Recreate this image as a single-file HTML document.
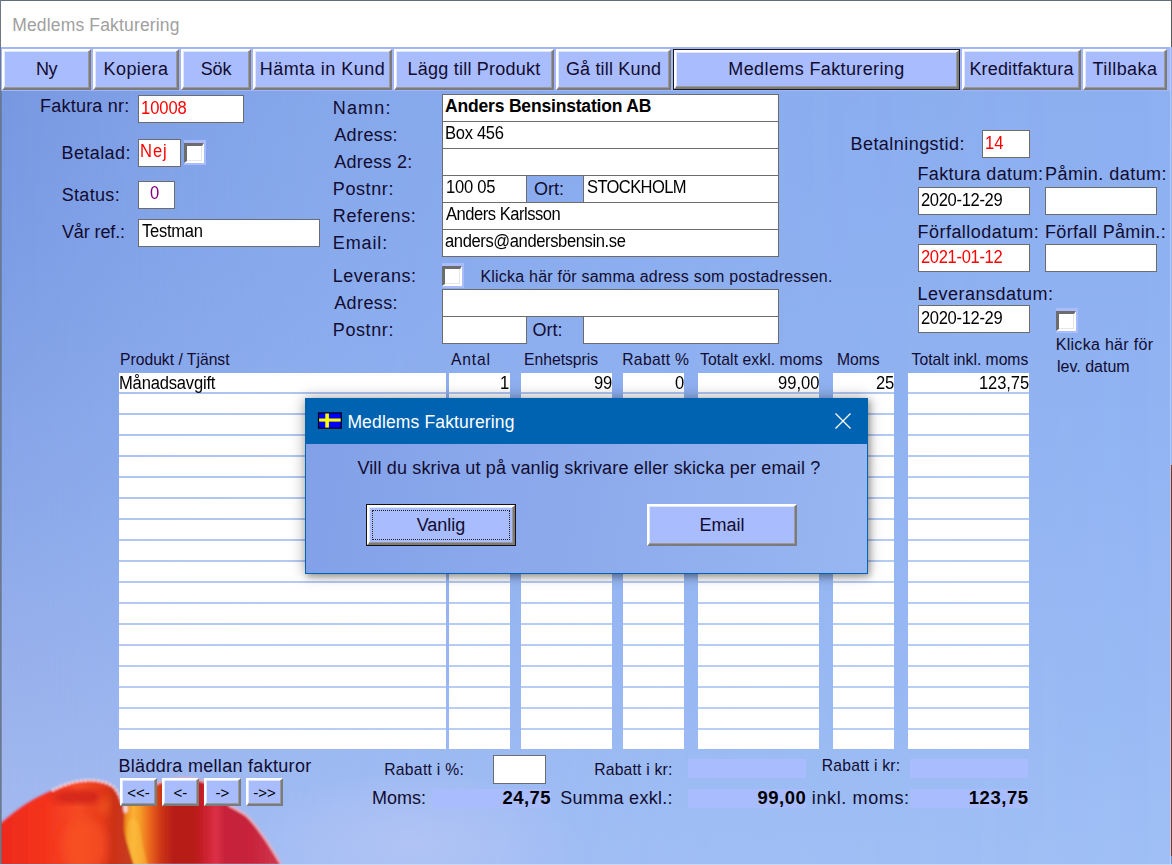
<!DOCTYPE html>
<html lang="sv">
<head>
<meta charset="utf-8">
<title>Medlems Fakturering</title>
<style>
html,body{margin:0;padding:0;}
body{width:1172px;height:865px;overflow:hidden;position:relative;font-family:"Liberation Sans",sans-serif;color:#120c30;background:#8aa8ea;}
#win{position:absolute;left:0;top:0;width:1172px;height:865px;overflow:hidden;}
#sky,#sky2{position:absolute;left:0;top:0;width:1172px;height:865px;}
#sky{background:linear-gradient(180deg,#8db0f1 0px,#8db0f1 91px,#91b3f2 380px,#98b9f4 650px,#9fbff6 865px);}
#sky2{background:linear-gradient(180deg,#7797e0 0px,#7797e0 91px,#7c9ce4 250px,#8ba8e8 515px,#a0b6ee 780px,#a5baf0 865px);
 -webkit-mask-image:linear-gradient(90deg,#000 0px,rgba(0,0,0,0.66) 130px,rgba(0,0,0,0.33) 330px,rgba(0,0,0,0.12) 700px,rgba(0,0,0,0) 1172px);
 mask-image:linear-gradient(90deg,#000 0px,rgba(0,0,0,0.66) 130px,rgba(0,0,0,0.33) 330px,rgba(0,0,0,0.12) 700px,rgba(0,0,0,0) 1172px);}
#cloud{position:absolute;left:250px;top:770px;width:330px;height:120px;background:radial-gradient(ellipse at 50% 60%,rgba(205,205,245,0.38) 0%,rgba(205,205,245,0.18) 45%,rgba(205,205,245,0) 70%);}
.abs{position:absolute;}
.t{position:absolute;white-space:nowrap;line-height:1;font-size:18px;}
.s{font-size:15.7px;}
.in{position:absolute;box-sizing:border-box;background:#fff;border:1px solid #6c6c6c;}
.m{position:absolute;white-space:nowrap;line-height:1;font-size:18px;color:#000;transform-origin:0 0;transform:scaleX(0.92);}
.red{color:#ff0000;}
.btn{position:absolute;box-sizing:border-box;background:#a9bcfd;border:2px solid;border-color:#fff #7b7b7b #7b7b7b #fff;box-shadow:inset -1px -1px 0 #9a9a9a, inset 1px 1px 0 #dfe6ff;text-align:center;font-size:18px;line-height:1;white-space:nowrap;color:#120c30;}
.btn span{position:absolute;left:0;right:0;text-align:center;}
.col{position:absolute;top:373px;height:376px;background:repeating-linear-gradient(180deg,#fff 0px,#fff 19px,rgba(255,255,255,0.3) 19px,rgba(255,255,255,0.3) 21px);}
.fld{position:absolute;background:#a9bcfd;height:19px;}
.b{font-weight:bold;font-size:18.5px;color:#000;}
.nav{font-size:15px;color:#000;}
.chk{position:absolute;width:22px;height:25px;background:#a9bcfd;}
.chk i{position:absolute;left:0;top:3px;width:20px;height:20px;box-sizing:border-box;background:#fff;border-style:solid;border-width:3px 2px 2px 3px;border-color:#6c6c6c #fff #fff #6c6c6c;box-shadow:inset -1px -1px 0 #e6e6e6;}
</style>
</head>
<body>
<div id="win">
<div id="sky"></div><div id="sky2"></div><div id="cloud"></div>
<svg class="abs" id="flower" style="left:0;top:765px;" width="300" height="100" viewBox="0 765 300 100">
<defs>
<filter id="bl" x="-5%" y="-5%" width="110%" height="110%"><feGaussianBlur stdDeviation="0.8"/></filter>
<filter id="bl2" x="-20%" y="-20%" width="140%" height="140%"><feGaussianBlur stdDeviation="4"/></filter>
<linearGradient id="gb" gradientUnits="userSpaceOnUse" x1="120" y1="0" x2="285" y2="0">
<stop offset="0" stop-color="#d04a18"/><stop offset="0.035" stop-color="#ee8a1e"/><stop offset="0.08" stop-color="#fbb232"/><stop offset="0.125" stop-color="#f59a28"/><stop offset="0.18" stop-color="#ea661c"/><stop offset="0.25" stop-color="#cc3418"/><stop offset="0.33" stop-color="#b61c14"/><stop offset="0.45" stop-color="#b81a18"/><stop offset="0.52" stop-color="#cc2230"/><stop offset="0.58" stop-color="#dc3048"/><stop offset="0.64" stop-color="#c6223a"/><stop offset="0.8" stop-color="#c8243c"/><stop offset="1" stop-color="#d23a52"/>
</linearGradient>
<linearGradient id="gf" gradientUnits="userSpaceOnUse" x1="0" y1="0" x2="126" y2="0">
<stop offset="0" stop-color="#ee2a1e"/><stop offset="0.35" stop-color="#f4331f"/><stop offset="0.62" stop-color="#f64a22"/><stop offset="0.8" stop-color="#e83c1c"/><stop offset="0.9" stop-color="#cc3018"/><stop offset="1" stop-color="#c83a1c"/>
</linearGradient>
<clipPath id="cf"><path d="M0,824 C8,817 18,809 26,804 C38,796 52,790 64,785 C74,781 84,779.5 92,780 C101,780.5 109,783 113,786 C118,790 121,798 123,806 C125,814 124,822 124,830 C126,842 131,855 134,866 L0,866 Z"/></clipPath>
</defs>
<g filter="url(#bl)">
<path d="M120,812 C130,800 145,789 158,783 C168,779.5 178,778 186,778 C196,778 208,782 216,788 C222,794 226,802 230,806 C236,809 242,812 247,816 C255,824 262,834 268,843 C273,851 278,859 282,866 L120,866 Z" fill="url(#gb)" stroke="#f0b4c4" stroke-width="2"/>
<path d="M127,866 C126,850 126,836 128,822 C131,816 137,818 139,826 C142,842 145,855 148,866 Z" fill="#fcc040" opacity="0.55"/>
<path d="M0,824 C8,817 18,809 26,804 C38,796 52,790 64,785 C74,781 84,779.5 92,780 C101,780.5 109,783 113,786 C118,790 121,798 123,806 C125,814 124,822 124,830 C126,842 131,855 134,866 L0,866 Z" fill="url(#gf)"/>
<g clip-path="url(#cf)">
<ellipse cx="78" cy="797" rx="26" ry="6" fill="#c0161a" opacity="0.75" filter="url(#bl2)"/>
<ellipse cx="85" cy="845" rx="22" ry="26" fill="#fa5426" opacity="0.6" filter="url(#bl2)"/>
<ellipse cx="104" cy="805" rx="6" ry="10" fill="#f05a1e" opacity="0.7" filter="url(#bl2)"/>
</g>
<path d="M52,790.5 C58,787.5 66,784 72,782.5 C80,780.5 88,780 94,780.5 C102,781.2 109,783.5 113,786.5 C117,790 120,796 122,803" fill="none" stroke="#fbe4ec" stroke-width="2.6" stroke-dasharray="3 1.2" opacity="0.95"/>
<path d="M0,824 C8,817 18,809 26,804 C36,797.5 44,794 52,790.5" fill="none" stroke="#e8607a" stroke-width="1.2" opacity="0.7"/>
<ellipse cx="125.5" cy="809" rx="2.2" ry="4" fill="#fbe0e8" opacity="0.9"/>
</g>
</svg>
<div class="abs" id="titlebar" style="left:0;top:0;width:1172px;height:47px;background:#fff;"></div>
<div class="t" id="wtitle" style="left:12.2px;top:17px;font-size:17.5px;color:#a0a0a0;letter-spacing:0.16px;">Medlems Fakturering</div>
<div class="abs" id="toolbar" style="left:0;top:47px;width:1172px;height:44px;background:#a2b5f9;"></div>
<div class="btn" style="left:2px;top:49px;width:89px;height:41px;"><span style="top:9px;letter-spacing:-0.50px;">Ny</span></div>
<div class="btn" style="left:93px;top:49px;width:86px;height:41px;"><span style="top:9px;letter-spacing:0.40px;">Kopiera</span></div>
<div class="btn" style="left:181px;top:49px;width:70px;height:41px;"><span style="top:9px;letter-spacing:-0.12px;">Sök</span></div>
<div class="btn" style="left:253px;top:49px;width:139px;height:41px;"><span style="top:9px;letter-spacing:0.48px;">Hämta in Kund</span></div>
<div class="btn" style="left:394px;top:49px;width:160px;height:41px;"><span style="top:9px;letter-spacing:0.22px;">Lägg till Produkt</span></div>
<div class="btn" style="left:556px;top:49px;width:115px;height:41px;"><span style="top:9px;letter-spacing:0.18px;">Gå till Kund</span></div>
<div class="abs" style="left:673px;top:49px;width:287px;height:41px;background:#1a1a1a;"></div>
<div class="btn" style="left:674px;top:50px;width:285px;height:39px;"><span style="top:8px;letter-spacing:0.38px;">Medlems Fakturering</span></div>
<div class="btn" style="left:962px;top:49px;width:119px;height:41px;"><span style="top:9px;letter-spacing:0.16px;">Kreditfaktura</span></div>
<div class="btn" style="left:1083px;top:49px;width:84px;height:41px;"><span style="top:9px;letter-spacing:0.47px;">Tillbaka</span></div>
<div class="t" style="left:40.1px;top:97px;letter-spacing:0.21px;">Faktura nr:</div>
<div class="in" style="left:138px;top:95px;width:106px;height:28px;"></div>
<div class="m red" style="left:140.7px;top:99px;letter-spacing:-0.08px;">10008</div>
<div class="t" style="left:61.5px;top:144px;letter-spacing:0.41px;">Betalad:</div>
<div class="in" style="left:138px;top:139px;width:43px;height:28px;"></div>
<div class="m red" style="left:139.9px;top:142px;letter-spacing:1.01px;">Nej</div>
<div class="chk" style="left:184px;top:140px;"><i></i></div>
<div class="t" style="left:61.7px;top:186px;letter-spacing:0.32px;">Status:</div>
<div class="in" style="left:138px;top:181px;width:37px;height:28px;"></div>
<div class="m" style="left:149.9px;top:184px;color:#800080;letter-spacing:0.00px;">0</div>
<div class="t" style="left:61.9px;top:223px;letter-spacing:-0.10px;">Vår ref.:</div>
<div class="in" style="left:138px;top:219px;width:182px;height:28px;"></div>
<div class="m" style="left:142.1px;top:222px;letter-spacing:-0.30px;">Testman</div>

<div class="t" style="left:332.8px;top:99px;letter-spacing:1.15px;">Namn:</div>
<div class="t" style="left:334.2px;top:126px;letter-spacing:0.40px;">Adress:</div>
<div class="t" style="left:334.2px;top:153px;letter-spacing:0.24px;">Adress 2:</div>
<div class="t" style="left:332.8px;top:180px;letter-spacing:0.60px;">Postnr:</div>
<div class="t" style="left:332.8px;top:207px;letter-spacing:0.63px;">Referens:</div>
<div class="t" style="left:332.8px;top:234px;letter-spacing:0.87px;">Email:</div>
<div class="in" style="left:442px;top:94px;width:337px;height:28px;"></div>
<div class="in" style="left:442px;top:121px;width:337px;height:28px;"></div>
<div class="in" style="left:442px;top:148px;width:337px;height:28px;"></div>
<div class="in" style="left:442px;top:175px;width:85px;height:28px;"></div>
<div class="in" style="left:583px;top:175px;width:196px;height:28px;"></div>
<div class="in" style="left:442px;top:202px;width:337px;height:28px;"></div>
<div class="in" style="left:442px;top:229px;width:337px;height:28px;"></div>
<div class="m" style="left:445.0px;top:98px;font-weight:bold;font-size:17.5px;transform:none;letter-spacing:-0.18px;">Anders Bensinstation AB</div>
<div class="m" style="left:444.9px;top:124px;letter-spacing:-0.32px;">Box 456</div>
<div class="m" style="left:445.5px;top:178px;letter-spacing:-0.26px;">100 05</div>
<div class="t" style="left:534.1px;top:180px;letter-spacing:-0.00px;">Ort:</div>
<div class="m" style="left:587.2px;top:178px;letter-spacing:-0.68px;">STOCKHOLM</div>
<div class="m" style="left:445.5px;top:205px;letter-spacing:-0.52px;">Anders Karlsson</div>
<div class="m" style="left:445.3px;top:232px;letter-spacing:-0.42px;">anders@andersbensin.se</div>

<div class="t" style="left:332.8px;top:267px;letter-spacing:0.51px;">Leverans:</div>
<div class="chk" style="left:442px;top:263px;"><i></i></div>
<div class="t" style="left:480.4px;top:269px;font-size:16px;letter-spacing:0.22px;">Klicka här för samma adress som postadressen.</div>
<div class="t" style="left:334.2px;top:294px;letter-spacing:0.40px;">Adress:</div>
<div class="t" style="left:332.8px;top:321px;letter-spacing:0.60px;">Postnr:</div>
<div class="in" style="left:442px;top:289px;width:337px;height:28px;"></div>
<div class="in" style="left:442px;top:316px;width:85px;height:28px;"></div>
<div class="t" style="left:532.6px;top:321px;letter-spacing:-0.00px;">Ort:</div>
<div class="in" style="left:583px;top:316px;width:196px;height:28px;"></div>

<div class="t" style="left:850.5px;top:135px;letter-spacing:0.45px;">Betalningstid:</div>
<div class="in" style="left:982px;top:130px;width:48px;height:28px;"></div>
<div class="m red" style="left:985.2px;top:134px;letter-spacing:0.08px;">14</div>
<div class="t" style="left:917.5px;top:165px;letter-spacing:0.35px;">Faktura datum:</div>
<div class="t" style="left:1045.0px;top:165px;letter-spacing:0.46px;">Påmin. datum:</div>
<div class="in" style="left:918px;top:187px;width:112px;height:28px;"></div>
<div class="m" style="left:920.7px;top:191px;letter-spacing:-0.37px;">2020-12-29</div>
<div class="in" style="left:1045px;top:187px;width:112px;height:28px;"></div>
<div class="t" style="left:917.5px;top:223px;letter-spacing:0.47px;">Förfallodatum:</div>
<div class="t" style="left:1045.0px;top:223px;letter-spacing:0.33px;">Förfall Påmin.:</div>
<div class="in" style="left:918px;top:244px;width:112px;height:28px;"></div>
<div class="m red" style="left:920.7px;top:248px;letter-spacing:-0.37px;">2021-01-12</div>
<div class="in" style="left:1045px;top:244px;width:112px;height:28px;"></div>
<div class="t" style="left:917.5px;top:285px;letter-spacing:0.50px;">Leveransdatum:</div>
<div class="in" style="left:918px;top:305px;width:112px;height:28px;"></div>
<div class="m" style="left:920.7px;top:309px;letter-spacing:-0.37px;">2020-12-29</div>
<div class="chk" style="left:1056px;top:308px;"><i></i></div>
<div class="t" style="left:1055.7px;top:337px;font-size:16px;letter-spacing:0.30px;">Klicka här för</div>
<div class="t" style="left:1057px;top:359px;font-size:16px;">lev. datum</div>
<div class="t s" style="left:120px;top:352px;">Produkt / Tjänst</div>
<div class="t s" style="left:451.0px;top:352px;letter-spacing:0.83px;">Antal</div>
<div class="t s" style="left:524px;top:352px;">Enhetspris</div>
<div class="t s" style="left:622.2px;top:352px;letter-spacing:0.33px;">Rabatt %</div>
<div class="t s" style="left:700.1px;top:352px;letter-spacing:0.08px;">Totalt exkl. moms</div>
<div class="t s" style="left:837px;top:352px;">Moms</div>
<div class="t s" style="left:911.6px;top:352px;letter-spacing:-0.01px;">Totalt inkl. moms</div>
<div class="col" style="left:119px;width:327px;"></div>
<div class="col" style="left:449px;width:61px;"></div>
<div class="col" style="left:521px;width:91px;"></div>
<div class="col" style="left:623px;width:61px;"></div>
<div class="col" style="left:698px;width:121px;"></div>
<div class="col" style="left:833px;width:61px;"></div>
<div class="col" style="left:908px;width:121px;"></div>
<div class="m" style="left:119.1px;top:374px;letter-spacing:-0.20px;">Månadsavgift</div>
<div class="m r" style="left:499.7px;top:374px;letter-spacing:0.00px;">1</div>
<div class="m r" style="left:594.0px;top:374px;letter-spacing:-0.13px;">99</div>
<div class="m r" style="left:674.9px;top:374px;letter-spacing:0.00px;">0</div>
<div class="m r" style="left:777.7px;top:374px;letter-spacing:-0.01px;">99,00</div>
<div class="m r" style="left:875.9px;top:374px;letter-spacing:-0.17px;">25</div>
<div class="m r" style="left:979.0px;top:374px;letter-spacing:-0.10px;">123,75</div>

<div class="t" style="left:118.5px;top:757px;letter-spacing:0.30px;">Bläddra mellan fakturor</div>
<div class="btn nav" style="left:120px;top:778px;width:37px;height:28px;"><span style="top:5px;">&lt;&lt;-</span></div>
<div class="btn nav" style="left:162px;top:778px;width:37px;height:28px;"><span style="top:5px;">&lt;-</span></div>
<div class="btn nav" style="left:204px;top:778px;width:37px;height:28px;"><span style="top:5px;">-&gt;</span></div>
<div class="btn nav" style="left:246px;top:778px;width:37px;height:28px;"><span style="top:5px;">-&gt;&gt;</span></div>
<div class="t s" style="left:384.2px;top:762px;letter-spacing:0.30px;">Rabatt i %:</div>
<div class="in" style="left:493px;top:755px;width:53px;height:29px;"></div>
<div class="t" style="left:372px;top:789px;">Moms:</div>
<div class="fld" style="left:432px;top:789px;width:119px;"></div>
<div class="t b" style="left:502.4px;top:789px;letter-spacing:0.46px;">24,75</div>
<div class="t s" style="left:594.2px;top:762px;letter-spacing:0.21px;">Rabatt i kr:</div>
<div class="fld" style="left:688px;top:759px;width:118px;"></div>
<div class="t" style="left:560.2px;top:789px;letter-spacing:0.31px;">Summa exkl.:</div>
<div class="fld" style="left:688px;top:789px;width:118px;"></div>
<div class="t b" style="left:757.4px;top:789px;letter-spacing:0.52px;">99,00</div>
<div class="t s" style="left:821.7px;top:758px;letter-spacing:0.24px;">Rabatt i kr:</div>
<div class="fld" style="left:910px;top:759px;width:118px;"></div>
<div class="t" style="left:811.8px;top:789px;letter-spacing:0.63px;">inkl. moms:</div>
<div class="fld" style="left:910px;top:789px;width:118px;"></div>
<div class="t b" style="left:968.8px;top:789px;letter-spacing:0.52px;">123,75</div>
<div class="abs" id="dlg" style="left:305px;top:398px;width:563px;height:176px;box-sizing:border-box;background:linear-gradient(100deg,#82a0e8 0%,#8eacec 55%,#98b6f1 100%);border:1px solid #0063b1;box-shadow:0 0 14px rgba(0,0,0,0.35),2px 3px 6px rgba(0,0,0,0.25);"></div>
<div class="abs" style="left:305px;top:398px;width:563px;height:46px;background:#0063b1;"></div>
<svg class="abs" style="left:317px;top:412px;" width="26" height="18" viewBox="0 0 26 18"><rect x="0.9" y="0.3" width="24" height="16.5" fill="#000"/><rect x="2.1" y="1.5" width="21.6" height="14.1" fill="#0000ff"/><rect x="8.3" y="1.5" width="3.6" height="14.1" fill="#ffff00"/><rect x="2.1" y="6.5" width="21.6" height="3.1" fill="#ffff00"/></svg>
<div class="t" id="dtitle" style="left:347.4px;top:414px;font-size:17.5px;color:#fff;letter-spacing:0.15px;">Medlems Fakturering</div>
<svg class="abs" style="left:834px;top:412px;" width="18" height="18" viewBox="0 0 18 18"><path d="M1.5 1.5 L16.5 16.5 M16.5 1.5 L1.5 16.5" stroke="#fff" stroke-width="1.3" fill="none"/></svg>
<div class="t" id="dmsg" style="left:357.4px;top:459px;letter-spacing:0.15px;">Vill du skriva ut på vanlig skrivare eller skicka per email ?</div>
<div class="abs" style="left:366px;top:504px;width:150px;height:42px;background:#1a1010;"></div>
<div class="btn" style="left:367px;top:505px;width:148px;height:40px;"><span style="top:9px;">Vanlig</span></div>
<div class="abs" style="left:372px;top:510px;width:138px;height:30px;box-sizing:border-box;border:1px dotted #222;"></div>
<div class="btn" style="left:647px;top:504px;width:150px;height:42px;"><span style="top:10px;">Email</span></div>
<div class="abs" style="left:0;top:0;width:1172px;height:1px;background:#5e6f7b;"></div>
<div class="abs" style="left:0;top:0;width:1px;height:865px;background:#6b7886;"></div>
<div class="abs" style="left:1px;top:91px;width:1px;height:774px;background:rgba(90,105,140,0.55);"></div>
<div class="abs" style="left:1171px;top:0;width:1px;height:865px;background:linear-gradient(180deg,#5a5a5a 0px,#5a5a5a 47px,#9db6f3 47px,#9db6f3 465px,#8a3214 465px,#8a3214 856px,#7a8cc0 856px);"></div>
<div class="abs" style="left:1170px;top:47px;width:1px;height:818px;background:rgba(255,255,255,0.28);"></div>
<div class="abs" style="left:0;top:864px;width:1172px;height:1px;background:#c9d6f2;"></div>
</div>
</body>
</html>
